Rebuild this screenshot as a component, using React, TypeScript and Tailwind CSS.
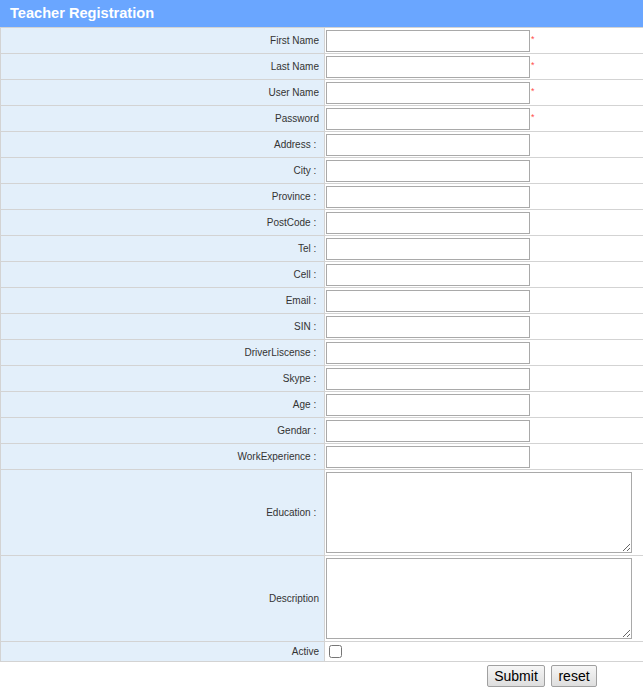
import React from "react";

type Field = { label: string; required?: boolean };

const fields: Field[] = [
  { label: "First Name", required: true },
  { label: "Last Name", required: true },
  { label: "User Name", required: true },
  { label: "Password", required: true },
  { label: "Address :\u00a0" },
  { label: "City :\u00a0" },
  { label: "Province :\u00a0" },
  { label: "PostCode :\u00a0" },
  { label: "Tel :\u00a0" },
  { label: "Cell :\u00a0" },
  { label: "Email :\u00a0" },
  { label: "SIN :\u00a0" },
  { label: "DriverLiscense :\u00a0" },
  { label: "Skype :\u00a0" },
  { label: "Age :\u00a0" },
  { label: "Gendar :\u00a0" },
  { label: "WorkExperience :\u00a0" },
];

function Label({ children }: { children: React.ReactNode }) {
  return (
    <div className="flex w-[324px] shrink-0 items-center justify-end whitespace-pre border-r border-[#d3d3d3] bg-[#e3effa] pr-[5px] text-[10px] text-[#333]">
      {children}
    </div>
  );
}

export default function App() {
  return (
    <div
      className="w-[643px] bg-white"
      style={{ fontFamily: '"Liberation Sans", Arial, sans-serif' }}
    >
      <div className="flex h-[27px] items-center bg-[#6aa6ff] pl-[10px] text-[14.6px] font-bold text-white">
        Teacher Registration
      </div>

      <div className="border-t border-l border-[#d3d3d3]">
        {fields.map((f) => (
          <div key={f.label} className="flex h-[26px] border-b border-[#d3d3d3]">
            <Label>{f.label}</Label>
            <div className="flex items-center pl-px">
              <input
                type="text"
                className="h-[22px] w-[204px] border border-[#a9a9a9] bg-white px-1 text-[13px] outline-none"
              />
              {f.required && (
                <span className="ml-px -mt-[3px] text-[9px] leading-none text-[#ff4d4d]">*</span>
              )}
            </div>
          </div>
        ))}

        {["Education :\u00a0", "Description"].map((l) => (
          <div key={l} className="flex h-[86px] border-b border-[#d3d3d3]">
            <Label>{l}</Label>
            <div className="flex items-center pl-px">
              <textarea className="h-[81px] w-[306px] border border-[#a9a9a9] bg-white text-[13px] outline-none" />
            </div>
          </div>
        ))}

        <div className="flex h-[20px] border-b border-[#d3d3d3]">
          <Label>Active</Label>
          <div className="flex items-center pl-[4px]">
            <input type="checkbox" className="h-[13px] w-[13px]" />
          </div>
        </div>
      </div>

      <div className="flex gap-[6px] pt-[3px] pl-[487px]">
        <button className="h-[22px] w-[58px] rounded-[2px] border border-[#a0a0a0] bg-gradient-to-b from-[#f6f6f6] to-[#dedede] text-[14px] text-black">
          Submit
        </button>
        <button className="h-[22px] w-[46px] rounded-[2px] border border-[#a0a0a0] bg-gradient-to-b from-[#f6f6f6] to-[#dedede] text-[14px] text-black">
          reset
        </button>
      </div>
    </div>
  );
}
